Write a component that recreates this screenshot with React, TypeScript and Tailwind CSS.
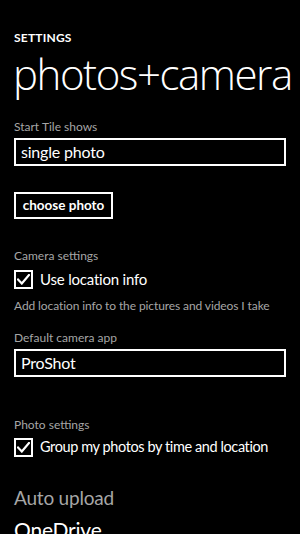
export default function App() {
  return (
    <div
      className="w-[300px] h-[534px] bg-black text-white overflow-hidden px-[14px]"
      style={{ fontFamily: 'Lato, "Noto Sans", sans-serif' }}
    >
      <div className="pt-[30px] text-[12px] font-bold leading-[16px] tracking-[0.2px]">
        SETTINGS
      </div>
      <div
        className="mt-[3px] -ml-[1px] text-[42px] font-light leading-[50px] whitespace-nowrap tracking-[-1.45px]"
        style={{ fontFamily: '"Open Sans", Lato, sans-serif' }}
      >
        photos+camera
      </div>

      <div className="mt-[20px] text-[12px] leading-[16px] text-[#a6a6a6]">Start Tile shows</div>
      <div className="mt-[3px] w-[272px] h-[28px] border-2 border-white flex items-center px-[5px] text-[16px] tracking-[-0.2px]">
        single photo
      </div>

      <button
        type="button"
        className="mt-[26px] block h-[27px] w-[99px] border-2 border-white text-[13.5px] font-bold"
      >
        choose photo
      </button>

      <div className="mt-[29px] text-[12px] leading-[16px] text-[#a6a6a6]">Camera settings</div>
      <div className="mt-[5px] flex items-center gap-[7px]">
        <Check />
        <span className="text-[15px] leading-[20px] tracking-[-0.2px]">Use location info</span>
      </div>
      <div className="mt-[9px] text-[12px] leading-[16px] text-[#a6a6a6] whitespace-nowrap tracking-[-0.1px]">
        Add location info to the pictures and videos I take
      </div>

      <div className="mt-[16px] text-[12px] leading-[16px] text-[#a6a6a6]">Default camera app</div>
      <div className="mt-[3px] w-[272px] h-[28px] border-2 border-white flex items-center px-[5px] text-[16px] tracking-[-0.2px]">
        ProShot
      </div>

      <div className="mt-[40px] text-[12px] leading-[16px] text-[#a6a6a6]">Photo settings</div>
      <div className="mt-[4px] flex items-center gap-[7px]">
        <Check />
        <span className="text-[14.5px] leading-[20px] whitespace-nowrap tracking-[-0.4px]">
          Group my photos by time and location
        </span>
      </div>

      <div className="mt-[29px] text-[19px] leading-[24px] text-[#a6a6a6] tracking-[-0.2px]">Auto upload</div>
      <div className="mt-[7px] text-[21px] leading-[26px] tracking-[-0.2px]">OneDrive</div>
    </div>
  );
}

function Check() {
  return (
    <div className="w-[19px] h-[19px] border-2 border-white flex items-center justify-center shrink-0">
      <svg width="13" height="11" viewBox="0 0 13 11" fill="none">
        <path d="M1 5.5 L4.8 9.5 L12 1" stroke="white" strokeWidth="2.2" strokeLinecap="square" />
      </svg>
    </div>
  );
}
